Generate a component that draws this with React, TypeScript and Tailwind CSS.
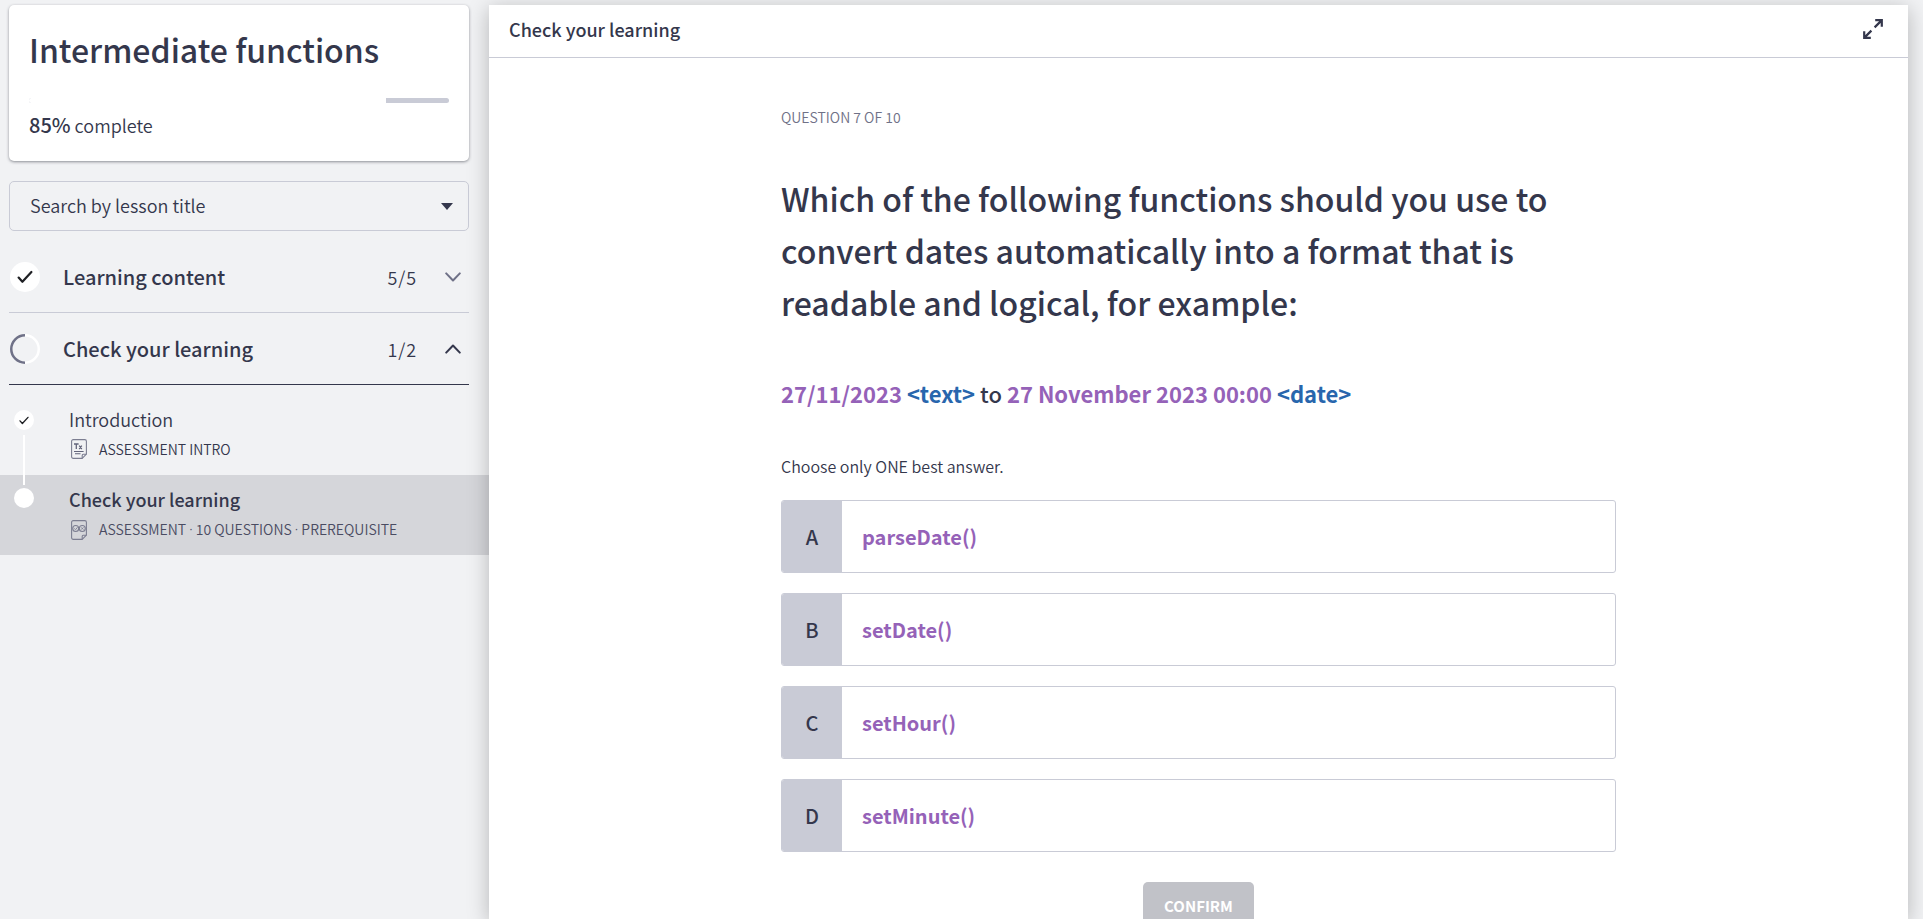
import React, { useState } from "react";

const LESSON_PROGRESS = 85;

const options = [
  { letter: "A", text: "parseDate()" },
  { letter: "B", text: "setDate()" },
  { letter: "C", text: "setHour()" },
  { letter: "D", text: "setMinute()" },
];

function CheckIcon({ className }: { className: string }) {
  return (
    <svg viewBox="0 0 16 14" className={className} fill="none" stroke="#1f2024" strokeWidth="2.2" strokeLinecap="round" strokeLinejoin="round" aria-hidden="true">
      <path d="M1.6 7.6 5.4 11.8 14.4 2" />
    </svg>
  );
}

function HalfRing() {
  return (
    <svg viewBox="0 0 30 30" className="size-[30px] shrink-0" fill="none" aria-hidden="true">
      <path d="M15 1.25a13.75 13.75 0 0 1 0 27.5" stroke="#fff" strokeWidth="2.5" />
      <path d="M15 1.25a13.75 13.75 0 0 0 0 27.5" stroke="#6f7187" strokeWidth="2.5" />
    </svg>
  );
}

function Chevron({ up }: { up?: boolean }) {
  return (
    <svg viewBox="0 0 16 10" className="h-[10px] w-4 shrink-0" fill="none" stroke={up ? "#34374c" : "#6f7187"} strokeWidth="2" strokeLinecap="round" strokeLinejoin="round" aria-hidden="true">
      <path d={up ? "M1.2 8.6 8 1.5l6.8 7.1" : "M1.2 1.4 8 8.5l6.8-7.1"} />
    </svg>
  );
}

function PageIcon({ kind }: { kind: "text" | "quiz" }) {
  return (
    <svg viewBox="0 0 16 20" className="h-5 w-4 shrink-0" fill="none" stroke="#7c7e91" strokeWidth="1.1" strokeLinejoin="round" aria-hidden="true">
      <path d="M11.2 19.4H2.2A1.6 1.6 0 0 1 .6 17.8V2.2A1.6 1.6 0 0 1 2.2.6h11.6a1.6 1.6 0 0 1 1.6 1.6v13z" />
      <path d="M15.4 15.2h-3.2a1 1 0 0 0-1 1v3.2" />
      {kind === "text" ? (
        <g stroke="#62647a">
          <path d="M3 5h4.6M5.3 5v5M8.2 6.7l2.6 3.3M10.8 6.7 8.2 10" strokeWidth="1.3" />
          <path d="M3 12.5h9.6M4 14.7h5.5" />
        </g>
      ) : (
        <g>
          <circle cx="4.7" cy="8.5" r="3" />
          <circle cx="11.3" cy="8.5" r="3" />
          <path d="m3.3 8.5 1.2 1.2 2-2.4M10.2 7.4l2.2 2.2M12.4 7.4l-2.2 2.2" strokeWidth="0.9" />
        </g>
      )}
    </svg>
  );
}

function ExpandIcon() {
  return (
    <svg viewBox="0 0 20 20" className="size-5" fill="none" stroke="#34374c" strokeWidth="2.2" aria-hidden="true">
      <path d="M12.2 1.2h6.6v6.6M18.6 1.4l-7 7M7.8 18.8H1.2v-6.6M1.4 18.6l7-7" />
    </svg>
  );
}

function Dot() {
  return <span className="font-['Noto_Sans']">·</span>;
}

function Sidebar() {
  return (
    <aside className="w-[489px] shrink-0 pt-[5px]">
      <div className="mr-5 ml-[9px]">
        <section className="rounded-[5px] bg-white px-5 pt-5 pb-[22px] shadow-[0_1px_3px_rgba(40,42,54,0.5)]">
          <h1 className="text-[32px] leading-[48px] font-medium">Intermediate functions</h1>
          <div role="progressbar" aria-label="Lesson progress" aria-valuenow={LESSON_PROGRESS} className="mt-[25px] h-[5px] overflow-hidden rounded-full bg-[#c9cbd6]">
            <div className="h-full bg-white" style={{ width: `${LESSON_PROGRESS}%` }} />
          </div>
          <p className="mt-2 text-[18px] leading-7">
            <strong className="text-[20px] font-medium">85%</strong> complete
          </p>
        </section>

        <div className="relative mt-5">
          <select aria-label="Search by lesson title" className="h-[50px] w-full appearance-none rounded-[5px] border border-[#c9cbd6] bg-transparent px-5 pb-[2px] text-[18px] leading-7">
            <option>Search by lesson title</option>
          </select>
          <svg viewBox="0 0 12 7" className="pointer-events-none absolute top-[22px] right-4 h-[7px] w-3" fill="#34374c" aria-hidden="true">
            <path d="M0 0h12L6 7z" />
          </svg>
        </div>

        <nav aria-label="Lesson sections" className="mt-[10px]">
          <button type="button" className="flex h-[72px] w-full items-center border-b border-[#c9cbd6] pr-2 text-left">
            <span className="ml-px flex size-[30px] shrink-0 items-center justify-center rounded-full bg-white">
              <CheckIcon className="h-[14px] w-4" />
            </span>
            <span className="ml-[23px] flex-1 text-[20px] leading-7 font-medium">Learning content</span>
            <span className="mr-7 text-[18px] leading-7 tracking-wider">5/5</span>
            <Chevron />
          </button>
          <button type="button" className="flex h-[72px] w-full items-center border-b border-[#34374c] pr-2 text-left">
            <span className="ml-px flex size-[30px] shrink-0">
              <HalfRing />
            </span>
            <span className="ml-[23px] flex-1 text-[20px] leading-7 font-medium">Check your learning</span>
            <span className="mr-7 text-[18px] leading-7 tracking-wider">1/2</span>
            <Chevron up />
          </button>
        </nav>
      </div>

      <ul className="mt-[10px]">
        <li className="flex h-20 pl-[14px]">
          <div className="z-[1] flex w-5 shrink-0 flex-col items-center gap-[5px] pt-[15px]">
            <span className="flex size-5 shrink-0 items-center justify-center rounded-full bg-white">
              <CheckIcon className="h-[9px] w-[10px]" />
            </span>
            <span className="h-[50px] w-[2px] shrink-0 bg-white" />
          </div>
          <a href="#introduction" className="ml-[35px] flex-1 pt-3">
            <span className="block text-[18px] leading-6">Introduction</span>
            <span className="mt-[6px] flex items-center pl-[2px] text-[14px] leading-6">
              <PageIcon kind="text" />
              <span className="ml-3">ASSESSMENT INTRO</span>
            </span>
          </a>
        </li>
        <li className="flex h-20 bg-[#d5d6da] pl-[14px]">
          <div className="w-5 shrink-0 pt-[13px]">
            <span className="block size-5 rounded-full bg-white" />
          </div>
          <a href="#check-your-learning" aria-current="page" className="ml-[35px] flex-1 pt-3">
            <span className="block text-[18px] leading-6 font-medium">Check your learning</span>
            <span className="mt-[6px] flex items-center pl-[2px] text-[14px] leading-6">
              <PageIcon kind="quiz" />
              <span className="ml-3 text-[#4a4c62]">
                ASSESSMENT <Dot /> 10 QUESTIONS <Dot /> PREREQUISITE
              </span>
            </span>
          </a>
        </li>
      </ul>
    </aside>
  );
}

function Question() {
  const [selected, setSelected] = useState<string | null>(null);
  return (
    <form className="mx-auto w-full max-w-[835px] pt-[47px] pb-12" onSubmit={(e) => e.preventDefault()}>
      <p className="text-[14px] leading-6 text-[#6f7187]">QUESTION 7 OF 10</p>
      <h2 className="mt-[43px] text-[32px] leading-[52px] font-medium">
        Which of the following functions should you use to convert dates automatically into a format that is readable and logical, for example:
      </h2>
      <p className="mt-[49px] text-[22px] leading-[33px] font-bold text-[#9562b8]">
        27/11/2023 <span className="text-[#2866ad]">&lt;text&gt;</span> <span className="font-medium text-[#34374c]">to</span>{" "}
        27 November 2023 00:00 <span className="text-[#2866ad]">&lt;date&gt;</span>
      </p>
      <fieldset className="mt-11">
        <legend className="text-[16px] leading-6">Choose only ONE best answer.</legend>
        <div className="mt-[22px] flex flex-col gap-5">
          {options.map(({ letter, text }) => (
            <label key={letter} className="relative flex h-[73px] cursor-pointer overflow-hidden rounded-[3px] border border-[#c9cbd6]">
              <input type="radio" name="answer" value={letter} checked={selected === letter} onChange={() => setSelected(letter)} className="sr-only" />
              <span className="flex w-[60px] items-center justify-center bg-[#c9cbd6] text-[20px] leading-7 font-medium">{letter}</span>
              <span className="flex items-center px-5 text-[20px] leading-7 font-bold text-[#9562b8]">{text}</span>
            </label>
          ))}
        </div>
      </fieldset>
      <div className="mt-[30px] flex justify-center">
        <button type="submit" disabled={!selected} className="h-12 rounded-[5px] bg-[#c1c2c8] px-[21px] text-[15px] leading-6 font-bold text-white">
          CONFIRM
        </button>
      </div>
    </form>
  );
}

export default function App() {
  return (
    <div className="flex h-screen overflow-hidden bg-[#f1f2f4] font-['Noto_Sans_CJK_SC',sans-serif] font-[350] text-[#34374c]">
      <Sidebar />
      <main className="relative z-10 mt-[5px] mr-[15px] min-w-0 flex-1 bg-white shadow-[0_4px_20px_rgba(0,0,0,0.25)]">
        <header className="flex h-[53px] items-center justify-between border-b border-[#c9cbd6] pr-[25px] pb-1 pl-5">
          <h2 className="text-[18px] leading-7 font-medium">Check your learning</h2>
          <button type="button" aria-label="Full screen">
            <ExpandIcon />
          </button>
        </header>
        <Question />
      </main>
    </div>
  );
}
